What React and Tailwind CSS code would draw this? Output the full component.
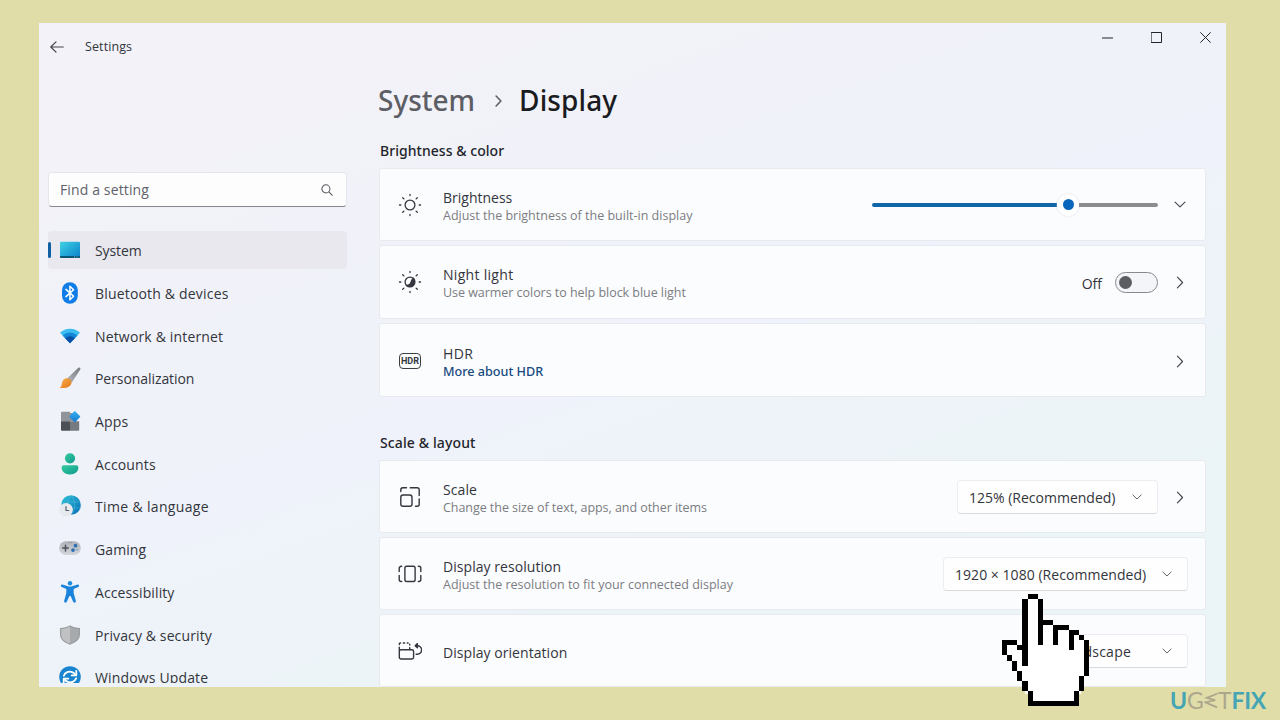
import React from "react";

const stroke = { fill: "none", stroke: "currentColor", strokeLinecap: "round", strokeLinejoin: "round" };

/* ---------- small glyphs ---------- */

function ChevronRight({ className }) {
  return (
    <svg viewBox="0 0 8 14" className={className} {...stroke} strokeWidth="1.2">
      <path d="M1.2 1.2 6.8 7 1.2 12.8" />
    </svg>
  );
}

function ChevronDown({ className }) {
  return (
    <svg viewBox="0 0 14 8" className={className} {...stroke} strokeWidth="1.3">
      <path d="M1.2 1.2 7 6.8 12.8 1.2" />
    </svg>
  );
}

/* ---------- navigation icons ---------- */

function SystemIcon() {
  return (
    <svg viewBox="0 0 22 22" className="size-[22px]">
      <defs>
        <linearGradient id="sys" x1="0" y1="0" x2="1" y2="1">
          <stop offset="0" stopColor="#3fd3e6" />
          <stop offset="1" stopColor="#0a7fc9" />
        </linearGradient>
      </defs>
      <rect x="1" y="2.7" width="20" height="16.3" rx="1.2" fill="url(#sys)" />
      <path d="M1 17h20v.9a1.1 1.1 0 0 1-1.1 1.1H2.1A1.1 1.1 0 0 1 1 17.9z" fill="#0b5675" />
      <path d="M15 18h1M17.5 18h1" stroke="#9fd4e8" strokeWidth=".8" />
    </svg>
  );
}

function BluetoothIcon() {
  return (
    <svg viewBox="0 0 22 22" className="size-[22px]">
      <rect x="3" y="0.3" width="15.8" height="21.4" rx="7.9" fill="#0f7ce8" />
      <path d="M7 7.400l7.600 6.900-3.700 3.500V4.200l3.700 3.500L7 14.600" fill="none" stroke="#fff" strokeWidth="1.5" strokeLinejoin="round" strokeLinecap="round" />
    </svg>
  );
}

function NetworkIcon() {
  return (
    <svg viewBox="0 0 22 22" className="size-[22px]">
      <path d="M1 7.700a14.500 14.500 0 0 1 20 0L11 18.300z" fill="#3cbdf0" />
      <path d="M3.600 10.500a10.800 10.800 0 0 1 14.800 0L11 18.300z" fill="#1488d8" />
      <path d="M6.200 13.200a7 7 0 0 1 9.600 0L11 18.300z" fill="#0b50a5" />
    </svg>
  );
}

function BrushIcon() {
  return (
    <svg viewBox="0 0 22 22" className="size-[22px]">
      <defs>
        <linearGradient id="handle" x1="1" y1="0" x2="0" y2="1">
          <stop offset="0" stopColor="#777b80" />
          <stop offset="1" stopColor="#b5b8bc" />
        </linearGradient>
        <linearGradient id="bristle" x1="0" y1="0" x2="1" y2="1">
          <stop offset="0" stopColor="#f6b04c" />
          <stop offset="1" stopColor="#e5761a" />
        </linearGradient>
      </defs>
      <path d="M19.300.8c1.200-.8 2.700.4 1.900 1.700L12.800 15.500 8.100 11.600z" fill="url(#handle)" />
      <path d="M8.400 11.300c2.300.3 3.900 1.800 4.200 4.100-.6 4.400-6 6.700-12 5.300 2.300-1.200 1.900-3.200 2.600-5.700.8-2.500 2.800-4 5.200-3.700z" fill="url(#bristle)" />
    </svg>
  );
}

function AppsIcon() {
  return (
    <svg viewBox="0 0 22 22" className="size-[22px]">
      <defs>
        <linearGradient id="tile" x1="0" y1="0" x2="1" y2="1">
          <stop offset="0" stopColor="#35b3f2" />
          <stop offset="1" stopColor="#1478cf" />
        </linearGradient>
      </defs>
      <path d="M2 2.500a.8.800 0 0 1 .8-.8H11v9.500H2z" fill="#8e9499" />
      <path d="M2 11.200h9v9.500H2.800a.8.800 0 0 1-.8-.8z" fill="#4b5057" />
      <path d="M11 11.200h9.200v8.700a.8.800 0 0 1-.8.800H11z" fill="#747a80" />
      <path d="M11 3h4v8.200h-4z" fill="#8e9499" />
      <rect x="11.700" y="2.500" width="8.200" height="8.200" rx=".9" transform="rotate(45 15.800 6.600)" fill="url(#tile)" />
    </svg>
  );
}

function AccountsIcon() {
  return (
    <svg viewBox="0 0 22 22" className="size-[22px]">
      <defs>
        <linearGradient id="acc" x1="0" y1="0" x2="1" y2="1">
          <stop offset="0" stopColor="#35cba0" />
          <stop offset="1" stopColor="#109b8c" />
        </linearGradient>
      </defs>
      <circle cx="11" cy="5.300" r="5.100" fill="url(#acc)" />
      <path d="M4.700 12.300h12.600a2.100 2.100 0 0 1 2.100 2.100c0 4-3.400 7-8.400 7s-8.400-3-8.400-7a2.100 2.100 0 0 1 2.100-2.100z" fill="url(#acc)" />
    </svg>
  );
}

function TimeIcon() {
  return (
    <svg viewBox="0 0 22 22" className="size-[22px]">
      <defs>
        <linearGradient id="globe" x1="0" y1="0" x2="1" y2="1">
          <stop offset="0" stopColor="#2cc0d6" />
          <stop offset="1" stopColor="#0b6fb8" />
        </linearGradient>
      </defs>
      <circle cx="12" cy="10" r="9.800" fill="url(#globe)" />
      <path d="M2.900 7h18M3 13h18.200M12 .2c-5 5.500-5 14 0 19.600M12 .2c5 5.500 5 14 0 19.600" fill="none" stroke="#6ed4ea" strokeWidth=".6" opacity=".55" />
      <circle cx="7" cy="14.800" r="6.900" fill="#e6e9ed" />
      <path d="M7 11.200v4.300h3.200" fill="none" stroke="#54606b" strokeWidth="1.200" />
    </svg>
  );
}

function GamingIcon() {
  return (
    <svg viewBox="0 0 22 22" className="size-[22px]">
      <defs>
        <linearGradient id="pad" x1="0" y1="0" x2="0" y2="1">
          <stop offset="0" stopColor="#aeb2b8" />
          <stop offset="1" stopColor="#d3d6da" />
        </linearGradient>
      </defs>
      <rect x="0.200" y="3.200" width="21.600" height="13.800" rx="6.800" fill="url(#pad)" />
      <path d="M6.500 7.300v5.600M3.700 10.100h5.600" stroke="#4c5259" strokeWidth="1.500" strokeLinecap="round" />
      <circle cx="16.500" cy="7.700" r="1.900" fill="#2f70b5" />
      <circle cx="14" cy="12.100" r="1.900" fill="#2f70b5" />
      <circle cx="18" cy="11.700" r=".8" fill="#5d8fc0" />
      <path d="M9.500 4.700h1M12 4.700h1" stroke="#777d84" strokeWidth=".8" />
    </svg>
  );
}

function AccessibilityIcon() {
  return (
    <svg viewBox="0 0 22 22" className="size-[22px]">
      <circle cx="11" cy="2.300" r="2.200" fill="#1b8be0" />
      <path d="M3.300 3.500 9 5.300q2 .5 4 0l5.700-1.800q1.200-.2 1.400.9.200 1.100-.8 1.600L14.700 7.900v4.300l2.200 7.800q.2 1.300-1 1.600-1.200.2-1.700-.8L11.600 15h-1.200l-2.600 5.800q-.5 1-1.700.8-1.200-.3-1-1.600l2.200-7.800V7.900L2.700 6q-1-.5-.8-1.600.2-1.100 1.400-.9z" fill="#1a84dc" />
    </svg>
  );
}

function ShieldIcon() {
  return (
    <svg viewBox="0 0 22 22" className="size-[22px]">
      <path d="M11 1.200c3 2 6 2.700 10 2.700v6.400c0 5-3.600 8-10 10.500C4.600 18.300 1 15.300 1 10.300V3.900c4 0 7-.7 10-2.700z" fill="#989c9f" />
      <path d="M11 2.600c2.800 1.700 5.300 2.400 8.800 2.500v5.300c0 4.300-3 6.800-8.800 9.100z" fill="#a7aaac" />
      <path d="M11 2.600C8.200 4.300 5.700 5 2.200 5.100v5.300c0 4.300 3 6.800 8.800 9.100z" fill="#bfc1c2" />
    </svg>
  );
}

function UpdateIcon() {
  return (
    <svg viewBox="0 0 22 22" className="size-[22px]">
      <circle cx="11" cy="11" r="10.800" fill="#1b84cf" />
      <path d="M4.800 9.700c1.300-3.400 5-5 8.500-3.600 1.100.4 2 1.100 2.700 2" fill="none" stroke="#fff" strokeWidth="1.800" strokeLinecap="round" />
      <path d="M17.300 4.800v4.500h-4.600" fill="none" stroke="#fff" strokeWidth="1.800" strokeLinecap="round" strokeLinejoin="round" />
      <path d="M17.200 12.300c-1.300 3.400-5 5-8.500 3.600-1.100-.4-2-1.100-2.700-2" fill="none" stroke="#fff" strokeWidth="1.800" strokeLinecap="round" />
      <path d="M4.700 17.200v-4.500h4.600" fill="none" stroke="#fff" strokeWidth="1.800" strokeLinecap="round" strokeLinejoin="round" />
    </svg>
  );
}

/* ---------- card icons ---------- */

const rays = "M12 1.500v1M12 21.500v1M1.500 12h1.300M21.200 12h1.300M4.700 4.700l1.200 1.200M18.100 18.100l1.200 1.200M4.700 19.300l1.200-1.200M18.100 5.900l1.200-1.200";

function SunIcon() {
  return (
    <svg viewBox="0 0 24 24" className="size-6" {...stroke} strokeWidth="1.300">
      <circle cx="12" cy="12" r="4.900" />
      <path d={rays} />
    </svg>
  );
}

function NightIcon() {
  return (
    <svg viewBox="0 0 24 24" className="size-6" {...stroke} strokeWidth="1.300">
      <circle cx="12" cy="12" r="4.900" fill="#fff" />
      <path d="M15.300 8.200a5 5 0 0 1-7 7.100c2.700.2 4.200-.4 4.600-2.600.2-1.800.8-3 2.400-4.500z" fill="currentColor" />
      <path d={rays} />
    </svg>
  );
}

function HdrIcon() {
  return (
    <span className="mt-[2px] flex h-4 w-[22px] items-center justify-center rounded-[4px] border border-[#3c3f46] font-['Roboto',sans-serif] text-[9px] leading-none font-bold">
      HDR
    </span>
  );
}

function ScaleIcon() {
  return (
    <svg viewBox="0 0 24 24" className="size-6" {...stroke} strokeWidth="1.400">
      <rect x="2.800" y="10" width="11.200" height="11.200" rx="2.200" />
      <path d="M2.800 6.500V4.800a2 2 0 0 1 2-2H8.500M12.300 2.800h6.900a2 2 0 0 1 2 2v5.700M21.200 14v5.200a2 2 0 0 1-2 2h-1.700" />
    </svg>
  );
}

function ResolutionIcon() {
  return (
    <svg viewBox="0 0 24 24" className="size-6" {...stroke} strokeWidth="1.400">
      <rect x="6.900" y="4.300" width="10.200" height="15.200" rx="1.800" />
      <path d="M3.700 4.300H3.200a2 2 0 0 0-2 2v3.300M1.200 13.500v4a2 2 0 0 0 2 2h.5M20.300 4.300h.5a2 2 0 0 1 2 2v3.300M22.800 13.500v4a2 2 0 0 1-2 2h-.5" />
    </svg>
  );
}

function OrientationIcon() {
  return (
    <svg viewBox="0 0 24 24" className="size-6" {...stroke} strokeWidth="1.400">
      <rect x="1.300" y="10.800" width="14.300" height="9.200" rx="1.700" />
      <path d="M1.300 5.500V4.900A1.300 1.300 0 0 1 2.500 4M5.300 4h1.300M9.300 4h.8M11.700 5.200v.8M11.700 8.600v2M1.300 8.300v3" />
      <path d="M17.800 6.700h1.500a4.300 4.300 0 0 1 0 8.600h-1.200" />
      <path d="M19.400 4.600 17.200 6.700l2.200 2.100z" fill="currentColor" />
    </svg>
  );
}

/* ---------- structure ---------- */

const navItems = [
  { label: "System", Icon: SystemIcon, track: "tracking-[-0.1px]", active: true },
  { label: "Bluetooth & devices", Icon: BluetoothIcon, track: "tracking-[0.18px]" },
  { label: "Network & internet", Icon: NetworkIcon, track: "tracking-[0.16px]" },
  { label: "Personalization", Icon: BrushIcon, track: "tracking-[-0.07px]" },
  { label: "Apps", Icon: AppsIcon, track: "tracking-[0.2px]" },
  { label: "Accounts", Icon: AccountsIcon, track: "tracking-[0.16px]" },
  { label: "Time & language", Icon: TimeIcon, track: "tracking-[0.34px]" },
  { label: "Gaming", Icon: GamingIcon, track: "tracking-[0.1px]" },
  { label: "Accessibility", Icon: AccessibilityIcon, track: "tracking-[0.1px]" },
  { label: "Privacy & security", Icon: ShieldIcon, track: "tracking-[0.12px]" },
  { label: "Windows Update", Icon: UpdateIcon, track: "tracking-[0.15px]" },
];

function NavItem({ label, Icon, track, active }) {
  return (
    <li className="flex h-[42.7px] items-center">
      <div className={"flex h-[38px] w-full items-center rounded " + (active ? "bg-[#e8e8ee]" : "")}>
        <span className={"h-4 w-[3px] rounded-full " + (active ? "bg-[#0f5fa3]" : "")} />
        <span className="ml-[8px] flex">
          <Icon />
        </span>
        <span className={"ml-[14px] pt-px " + track}>{label}</span>
      </div>
    </li>
  );
}

function Card({ icon, title, titleTracking = "", sub, link, tracking = "", height = "h-[73px]", children }) {
  return (
    <div className={"flex shrink-0 items-center rounded-[3px] border border-[#e9eaef] bg-[#fbfcfe] pr-[17px] pl-[18px] " + height}>
      <span className="flex w-6 justify-center text-[#34373e]">{icon}</span>
      <div className="ml-[21px] flex flex-col pt-[4px]">
        <span className={"leading-[18px] " + titleTracking}>{title}</span>
        {sub && <span className={"text-[12.5px] leading-[18px] text-[#7b7d82] " + tracking}>{sub}</span>}
        {link && <a className="font-['Noto_Sans',sans-serif] text-[12.6px] leading-[17px] font-medium text-[#164a80]">{link}</a>}
      </div>
      <div className="ml-auto flex items-center">{children}</div>
    </div>
  );
}

function Select({ label, className, tracking = "" }) {
  return (
    <div className={"flex h-[34px] items-center justify-between rounded border border-[#ededf1] border-b-[#d9dade] bg-[#fefefe] pr-[15px] pl-[11px] " + className}>
      <span className={"pt-[2px] whitespace-nowrap " + tracking}>{label}</span>
      <ChevronDown className="h-[6px] w-[10px] text-[#55585e]" />
    </div>
  );
}

/* Hand pointer: runs of black cells as [column, row, width, height]. */
const outline = [
  [5, 0, 2, 1], [4, 1, 1, 13], [7, 1, 1, 9], [8, 5, 2, 1], [10, 6, 3, 1], [10, 6, 1, 4],
  [13, 7, 2, 1], [13, 7, 1, 4], [15, 8, 1, 1], [16, 9, 1, 7], [15, 16, 1, 3], [14, 19, 1, 3],
  [5, 21, 10, 1], [5, 19, 1, 3], [4, 17, 1, 2], [3, 15, 1, 2], [2, 13, 1, 2], [1, 12, 1, 1],
  [0, 9, 1, 3], [0, 9, 3, 1], [3, 10, 1, 1],
];

function HandPointer() {
  return (
    <svg viewBox="0 0 17 22" shapeRendering="crispEdges" className="absolute top-[593.5px] left-[1002px] h-[112.6px] w-[87px]">
      <path d="M5 .5h2v5h3v1h3v1h2v1h1v1h.5v7h-1v3h-1v2h-9v-2h-1v-2h-1v-2h-1v-2h-1v-1h-1v-3h3v1h1V.5z" fill="#fff" />
      {outline.map(([x, y, w, h], i) => (
        <rect key={i} x={x} y={y} width={w} height={h} fill="#000" />
      ))}
    </svg>
  );
}

function Watermark() {
  return (
    <div className="absolute top-[686px] left-[1170px] flex h-7 items-center font-['Lato',sans-serif] text-[23px] leading-none">
      <span className="font-bold text-[#46a5b4]">U</span>
      <span className="text-[#aca78c]">G</span>
      <svg viewBox="0 0 16 18" className="h-[17px] w-[15px]" fill="none" stroke="#aca78c" strokeWidth="1.900">
        <path d="M14.500 1.500 3 6.200l9 2.300L1.500 11l12.500 5.300" />
      </svg>
      <span className="-ml-px text-[#aca78c]">T</span>
      <span className="font-bold tracking-[-0.3px] text-[#46a5b4]">FIX</span>
    </div>
  );
}

export default function App() {
  return (
    <div className="relative h-[720px] w-[1280px] overflow-hidden bg-[#e1dda9] pt-[23px] pl-[39px] font-['Open_Sans',sans-serif] text-[14px] text-[#33353c]">
      <div className="relative flex h-[664px] w-[1187px] overflow-hidden bg-linear-160 from-[#f2f2f8] from-15% via-[#eff2fa] via-50% to-[#ebf4f6] to-80%">
        <aside className="h-[660px] w-[308px] shrink-0 overflow-hidden pl-[9px]">
          <header className="flex h-12 items-center pl-[2px]">
            <svg viewBox="0 0 14 12" className="h-3 w-[14px] text-[#44474e]" {...stroke} strokeWidth="1.200">
              <path d="M13.300 6H.8M6 .8.800 6 6 11.200" />
            </svg>
            <span className="ml-[21px] pt-px text-[12.5px] tracking-[0.1px]">Settings</span>
          </header>
          <div className="mt-[101px] flex h-[35px] w-[299px] items-center justify-between rounded border border-[#e6e7ed] border-b-[#85878d] bg-[#fdfdfe] pr-[13px] pl-[11px]">
            <span className="tracking-[0.13px] text-[#606269]">Find a setting</span>
            <svg viewBox="0 0 14 14" className="size-3 text-[#55585e]" {...stroke} strokeWidth="1.200">
              <circle cx="5.700" cy="5.700" r="4.700" />
              <path d="m9.200 9.200 4 4" />
            </svg>
          </div>
          <ul className="mt-[22px] w-[299px]">
            {navItems.map((item) => (
              <NavItem key={item.label} {...item} />
            ))}
          </ul>
        </aside>

        <main className="ml-8 flex w-[827px] flex-col">
          <h1 className="-ml-px mt-[56px] flex h-11 items-center font-['Noto_Sans',sans-serif] text-[28px] font-medium">
            <span className="text-[#5d5e65]">System</span>
            <ChevronRight className="mt-[2px] mr-[17px] ml-5 h-3 w-[7px] stroke-[1.8] text-[#5d5e65]" />
            <span className="tracking-[0.1px] text-[#1a1b20]">Display</span>
          </h1>
          <h2 className="mt-[20px] h-5 pl-px font-['Noto_Sans',sans-serif] text-[14px] leading-5 font-medium tracking-[0.04px] text-[#22242a]">Brightness &amp; color</h2>
          <section className="mt-[7px] flex flex-col gap-[4px]">
            <Card icon={<SunIcon />} title="Brightness" sub="Adjust the brightness of the built-in display">
              <div className="flex items-center">
                <span className="h-1 w-[185px] rounded-l-full bg-[#1166a8]" />
                <span className="flex size-[22px] items-center justify-center rounded-full bg-white shadow-[0_0_2px_#d5d8e0]">
                  <span className="size-[11px] rounded-full bg-[#0867bd]" />
                </span>
                <span className="h-1 w-[79px] rounded-r-full bg-[#8b8d8d]" />
              </div>
              <ChevronDown className="mr-[2px] ml-[16px] h-[7px] w-3 text-[#44474e]" />
            </Card>
            <Card icon={<NightIcon />} title="Night light" titleTracking="tracking-[0.3px]" sub="Use warmer colors to help block blue light" tracking="tracking-[-0.04px]" height="h-[74px]">
              <span className="pt-[3px]">Off</span>
              <span className="ml-[13px] flex h-[21px] w-[43px] items-center rounded-full border border-[#87898f] bg-[#f4f5f9] pl-[3px]">
                <span className="size-[13px] rounded-full bg-[#5b5d63]" />
              </span>
              <ChevronRight className="mr-1 ml-[18px] h-[13px] w-2 text-[#44474e]" />
            </Card>
            <Card icon={<HdrIcon />} title="HDR" titleTracking="tracking-[0.4px]" link="More about HDR" height="h-[74px]">
              <ChevronRight className="mt-[2px] mr-1 h-[13px] w-2 text-[#44474e]" />
            </Card>
          </section>
          <h2 className="mt-9 h-5 pl-px font-['Noto_Sans',sans-serif] text-[14px] leading-5 font-medium tracking-[0.12px] text-[#22242a]">Scale &amp; layout</h2>
          <section className="mt-[7px] flex flex-col gap-[4px]">
            <Card icon={<ScaleIcon />} title="Scale" titleTracking="tracking-[0.1px]" sub="Change the size of text, apps, and other items" tracking="tracking-[-0.05px]">
              <Select label="125% (Recommended)" className="w-[201px]" />
              <ChevronRight className="mt-px mr-1 ml-[18px] h-[13px] w-2 text-[#44474e]" />
            </Card>
            <Card icon={<ResolutionIcon />} title="Display resolution" titleTracking="tracking-[0.05px]" sub="Adjust the resolution to fit your connected display">
              <Select label="1920 × 1080 (Recommended)" className="w-[245px]" tracking="tracking-[0.04px]" />
            </Card>
            <Card icon={<OrientationIcon />} title="Display orientation" titleTracking="tracking-[0.05px]">
              <Select label="Landscape" className="w-[141px]" tracking="tracking-[0.25px]" />
            </Card>
          </section>
        </main>

        <div className="absolute top-0 right-0 flex items-center gap-[38px] pt-[9px] pr-[15px] text-[#22242a]">
          <svg viewBox="0 0 11 11" className="size-[11px]" {...stroke} strokeWidth="1.200">
            <path d="M.5 6h10" />
          </svg>
          <svg viewBox="0 0 11 11" className="size-[11px]" {...stroke} strokeWidth="1">
            <rect x=".5" y=".5" width="10" height="10" />
          </svg>
          <svg viewBox="0 0 11 11" className="size-[11px]" {...stroke} strokeWidth="1">
            <path d="m.6.6 9.800 9.800M10.400.6.6 10.400" />
          </svg>
        </div>
      </div>
      <Watermark />
      <HandPointer />
    </div>
  );
}
